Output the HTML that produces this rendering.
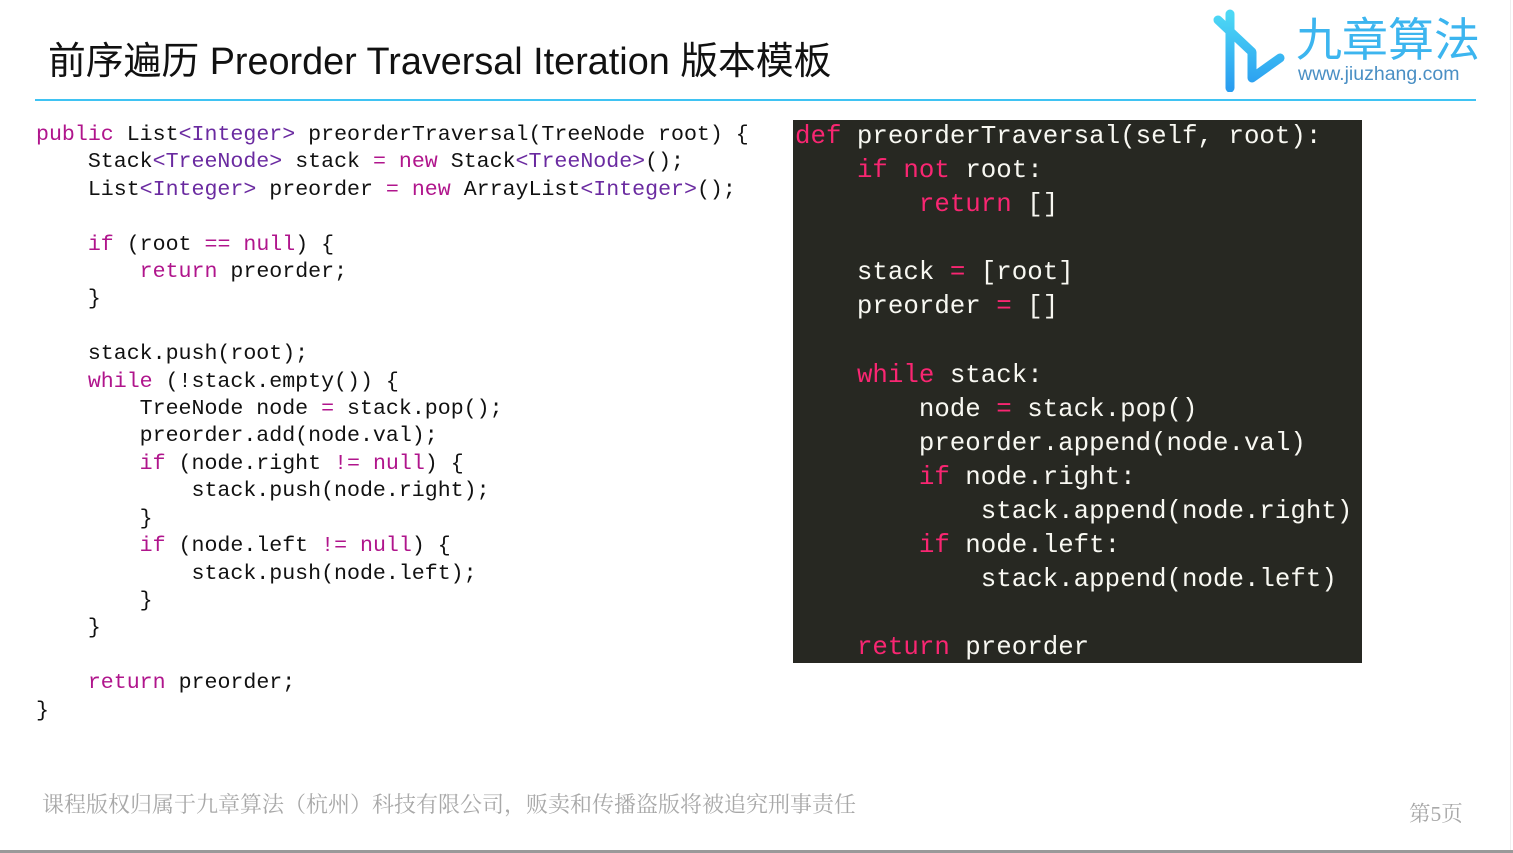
<!DOCTYPE html><html><head><meta charset="utf-8"><style>
body{margin:0;width:1513px;height:853px;background:#fff;position:relative;overflow:hidden;font-family:"Liberation Sans","Noto Sans CJK SC",sans-serif}
.t{position:absolute;left:48px;top:30px;font-size:37.8px;color:#111;white-space:nowrap}
.line{position:absolute;left:35px;top:99px;width:1441px;height:2px;background:#3fc3f3}
pre{margin:0;position:absolute;font-family:"Liberation Mono",monospace;white-space:pre}
.j{left:36px;top:122px;font-size:21.6px;line-height:27.4px;color:#111}
.j .k{color:#b0158c}.j .g{color:#6a2aa0}
.p{left:793px;top:120px;width:569px;height:543px;background:#272822;color:#f8f8f2;font-size:25.8px;line-height:34.1px;box-sizing:border-box;padding:0 0 0 2px}
.p .k{color:#f92672}
.f{position:absolute;left:42px;top:788px;font-size:22px;color:#a8a8a8;white-space:nowrap;font-family:"Liberation Serif","Noto Serif CJK SC",serif}
.pg{position:absolute;left:1409px;top:797px;font-size:21.5px;color:#a8a8a8;font-family:"Liberation Serif","Noto Serif CJK SC",serif}
.bot{position:absolute;left:0;top:850px;width:1513px;height:3px;background:#999}
.rt{position:absolute;left:1510px;top:0;width:1px;height:853px;background:#eee}
</style></head><body>
<div class="t">前序遍历 Preorder Traversal Iteration 版本模板</div>
<div class="line"></div>
<svg style="position:absolute;left:1210px;top:8px" width="80" height="84" viewBox="0 0 80 84"><defs><linearGradient id="a" x1="0" y1="0" x2="0" y2="1"><stop offset="0" stop-color="#4dd8f5"/><stop offset="1" stop-color="#2a9df0"/></linearGradient></defs><path d="M20 6 V80 M8 12 L42 44 V70 L70 50" fill="none" stroke="url(#a)" stroke-width="9" stroke-linecap="round" stroke-linejoin="round"/></svg>
<div style="position:absolute;left:1296px;top:10px;font-size:46px;color:#3cb5ef;font-family:'Noto Sans CJK SC',sans-serif;line-height:54px">九章算法</div>
<div style="position:absolute;left:1298px;top:63px;font-size:19.5px;color:#4a8fc4">www.jiuzhang.com</div>
<pre class="j"><span class="k">public</span> List<span class="g">&lt;Integer&gt;</span> preorderTraversal(TreeNode root) {
    Stack<span class="g">&lt;TreeNode&gt;</span> stack <span class="k">=</span> <span class="k">new</span> Stack<span class="g">&lt;TreeNode&gt;</span>();
    List<span class="g">&lt;Integer&gt;</span> preorder <span class="k">=</span> <span class="k">new</span> ArrayList<span class="g">&lt;Integer&gt;</span>();

    <span class="k">if</span> (root <span class="k">==</span> <span class="k">null</span>) {
        <span class="k">return</span> preorder;
    }

    stack.push(root);
    <span class="k">while</span> (!stack.empty()) {
        TreeNode node <span class="k">=</span> stack.pop();
        preorder.add(node.val);
        <span class="k">if</span> (node.right <span class="k">!=</span> <span class="k">null</span>) {
            stack.push(node.right);
        }
        <span class="k">if</span> (node.left <span class="k">!=</span> <span class="k">null</span>) {
            stack.push(node.left);
        }
    }

    <span class="k">return</span> preorder;
}</pre>
<pre class="p"><span class="k">def</span> preorderTraversal(self, root):
    <span class="k">if</span> <span class="k">not</span> root:
        <span class="k">return</span> []

    stack <span class="k">=</span> [root]
    preorder <span class="k">=</span> []

    <span class="k">while</span> stack:
        node <span class="k">=</span> stack.pop()
        preorder.append(node.val)
        <span class="k">if</span> node.right:
            stack.append(node.right)
        <span class="k">if</span> node.left:
            stack.append(node.left)

    <span class="k">return</span> preorder</pre>
<div class="f">课程版权归属于九章算法（杭州）科技有限公司，贩卖和传播盗版将被追究刑事责任</div>
<div class="pg">第5页</div>
<div class="rt"></div>
<div class="bot"></div>
</body></html>
